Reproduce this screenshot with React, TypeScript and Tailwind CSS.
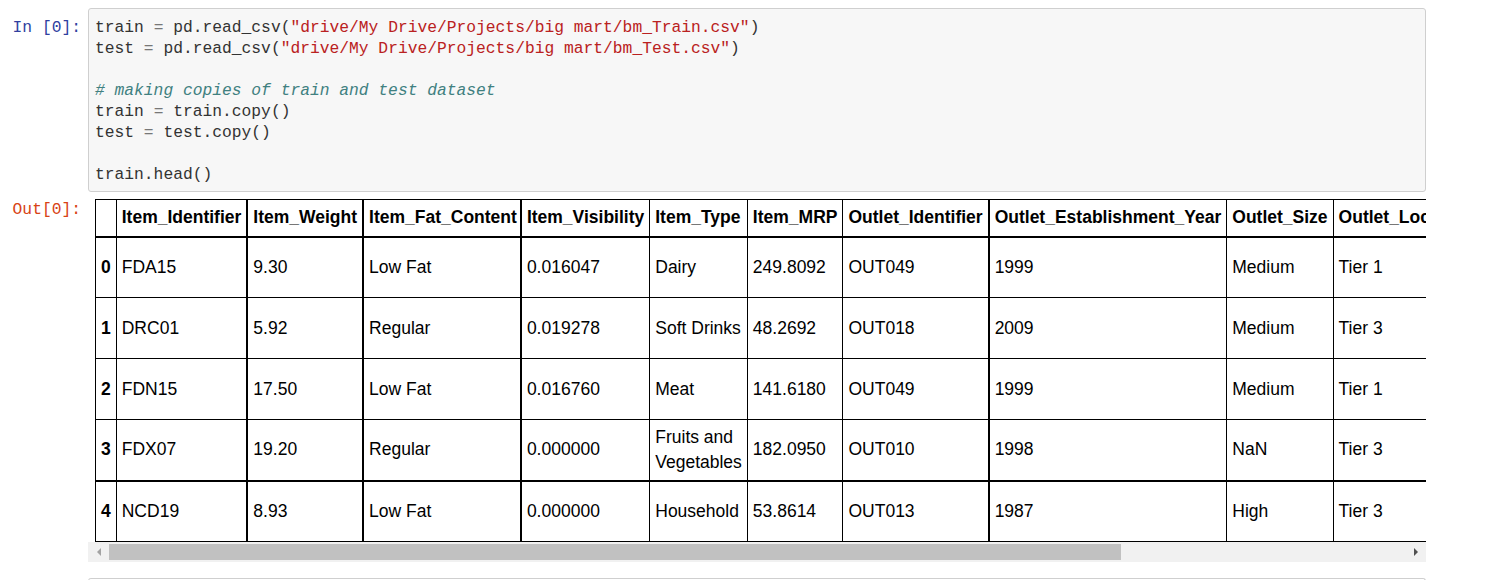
const mono = "font-['Liberation_Mono','DejaVu_Sans_Mono',monospace]";

const columns = [
  'Item_Identifier',
  'Item_Weight',
  'Item_Fat_Content',
  'Item_Visibility',
  'Item_Type',
  'Item_MRP',
  'Outlet_Identifier',
  'Outlet_Establishment_Year',
  'Outlet_Size',
  'Outlet_Location_Type',
  'Outlet_Type',
  'Item_Outlet_Sales',
];

// right border of each data column (thick ones come from the scaled screenshot)
const colBorder = [
  'border-r-2',
  'border-r-2',
  'border-r-2',
  'border-r',
  'border-r',
  'border-r',
  'border-r-2',
  'border-r',
  'border-r',
  'border-r',
  'border-r',
  'border-r',
];

const rowBorder = ['border-b', 'border-b', 'border-b', 'border-b-2', 'border-b'];

const rows = [
  ['FDA15', '9.30', 'Low Fat', '0.016047', 'Dairy', '249.8092', 'OUT049', '1999', 'Medium', 'Tier 1', 'Supermarket Type1', '3735.1380'],
  ['DRC01', '5.92', 'Regular', '0.019278', 'Soft Drinks', '48.2692', 'OUT018', '2009', 'Medium', 'Tier 3', 'Supermarket Type2', '443.4228'],
  ['FDN15', '17.50', 'Low Fat', '0.016760', 'Meat', '141.6180', 'OUT049', '1999', 'Medium', 'Tier 1', 'Supermarket Type1', '2097.2700'],
  ['FDX07', '19.20', 'Regular', '0.000000', 'Fruits and Vegetables', '182.0950', 'OUT010', '1998', 'NaN', 'Tier 3', 'Grocery Store', '732.3800'],
  ['NCD19', '8.93', 'Low Fat', '0.000000', 'Household', '53.8614', 'OUT013', '1987', 'High', 'Tier 3', 'Supermarket Type1', '994.7052'],
];

function Prompt({ text, color }: { text: string; color: string }) {
  return (
    <div className={`w-[88px] shrink-0 pr-[7px] text-right text-[16.3px] leading-[21px] ${mono} ${color}`}>
      {text}
    </div>
  );
}

function CodeCell() {
  const op = <span className="text-[#777]"> = </span>;
  return (
    <div className="flex">
      <div className="pt-[9px]">
        <Prompt text="In [0]:" color="text-[#303f9f]" />
      </div>
      <div
        className={`w-[1338px] rounded-[3px] border border-[#cfcfcf] bg-[#f7f7f7] pb-[6px] pl-[6px] pt-[8px] text-[16.3px] leading-[21px] text-[#333] ${mono}`}
      >
        <div className="whitespace-pre">
          train{op}pd.read_csv(<span className="text-[#ba2121]">"drive/My Drive/Projects/big mart/bm_Train.csv"</span>)
        </div>
        <div className="whitespace-pre">
          test{op}pd.read_csv(<span className="text-[#ba2121]">"drive/My Drive/Projects/big mart/bm_Test.csv"</span>)
        </div>
        <div className="h-[21px]" />
        <div className="whitespace-pre italic text-[#408080]"># making copies of train and test dataset</div>
        <div className="whitespace-pre">train{op}train.copy()</div>
        <div className="whitespace-pre">test{op}test.copy()</div>
        <div className="h-[21px]" />
        <div className="whitespace-pre">train.head()</div>
      </div>
    </div>
  );
}

function DataTable() {
  return (
    <table className="w-max border-collapse border-black font-['Liberation_Sans',Arial,sans-serif] text-[17.5px] leading-[25px] text-black">
      <thead>
        <tr>
          <th className="h-[37px] border-b-2 border-l border-r border-t border-black px-[5px]" />
          {columns.map((c, i) => (
            <th
              key={c}
              className={`whitespace-nowrap border-b-2 border-t border-black pl-[5px] text-left font-bold ${colBorder[i]} ${
                i === 2 ? 'pr-[3px]' : 'pr-[5px]'
              }`}
            >
              {c}
            </th>
          ))}
        </tr>
      </thead>
      <tbody>
        {rows.map((r, ri) => (
          <tr key={ri} className="h-[61px]">
            <th className={`border-l border-r border-black px-[5px] text-left font-bold ${rowBorder[ri]}`}>{ri}</th>
            {r.map((v, ci) => (
              <td
                key={ci}
                className={`border-black px-[5px] text-left ${rowBorder[ri]} ${colBorder[ci]} ${
                  ci === 4 ? 'w-[96px] whitespace-normal' : 'whitespace-nowrap'
                }`}
              >
                {v}
              </td>
            ))}
          </tr>
        ))}
      </tbody>
    </table>
  );
}

function ScrollBar() {
  return (
    <div className="flex h-[20px] w-[1338px] items-center bg-[#f1f1f1]">
      <div className="flex w-[21px] justify-center">
        <div className="h-0 w-0 border-y-[4px] border-r-[4px] border-y-transparent border-r-[#a3a3a3]" />
      </div>
      <div className="h-[16px] w-[1012px] bg-[#c1c1c1]" />
      <div className="flex-1" />
      <div className="flex w-[21px] justify-center">
        <div className="h-0 w-0 border-y-[4px] border-l-[4px] border-y-transparent border-l-[#505050]" />
      </div>
    </div>
  );
}

export default function App() {
  return (
    <div className="h-[580px] overflow-hidden bg-white pt-[8px]">
      <CodeCell />
      <div className="mt-[7px] flex">
        <Prompt text="Out[0]:" color="text-[#d84315]" />
        <div className="w-[1338px]">
          <div className="w-[1338px] overflow-hidden pl-[7px]">
            <DataTable />
          </div>
          <ScrollBar />
        </div>
      </div>
      <div className="ml-[88px] mt-[16px] h-[10px] w-[1338px] rounded-t-[3px] border-x border-t border-[#cfcfcf]" />
    </div>
  );
}
